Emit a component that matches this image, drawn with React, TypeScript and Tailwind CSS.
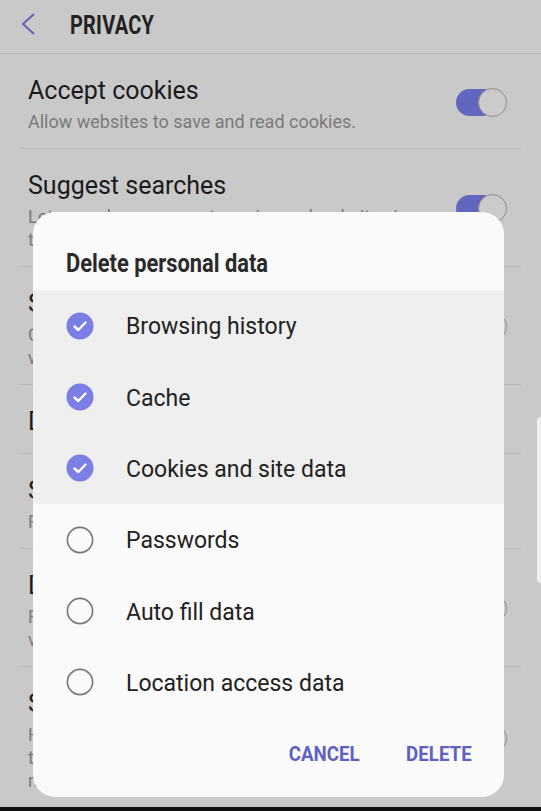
import React from 'react';

const font = { fontFamily: 'Roboto, "Noto Sans", sans-serif' };

type Setting = { title: string; lines: string[]; toggle?: boolean };

const settings: Setting[] = [
  { title: 'Accept cookies', lines: ['Allow websites to save and read cookies.'], toggle: true },
  { title: 'Suggest searches', lines: ['Let your phone suggest queries and websites in', 'the address bar as you type.'], toggle: true },
  { title: 'Show security warnings', lines: ['Check sites for security problems and warn', 'when one is found.'], toggle: true },
  { title: 'Delete personal data', lines: [] },
  { title: 'Smart protection', lines: ['Find and block pop-ups and trackers.'] },
  { title: 'Do not track', lines: ['Forward "Do not track" requests to all', 'visited websites.'], toggle: true },
  { title: 'Secret mode settings', lines: ['Hide secret mode tabs and require a password', 'to open them. Lock or unlock secret mode', 'right from the menu.'], toggle: true },
];

const options = [
  { label: 'Browsing history', checked: true },
  { label: 'Cache', checked: true },
  { label: 'Cookies and site data', checked: true },
  { label: 'Passwords', checked: false },
  { label: 'Auto fill data', checked: false },
  { label: 'Location access data', checked: false },
];

const Toggle = () => (
  <div className="relative w-[51px] h-[29px] shrink-0 -mt-[4px]">
    <div className="absolute left-0 top-[1px] w-[40px] h-[27px] rounded-full bg-[#6266bf]" />
    <div className="absolute right-0 top-0 w-[29px] h-[29px] rounded-full bg-[#cbcbcb] border border-[#8c8c8c]" />
  </div>
);

const CheckCircle = ({ checked }: { checked: boolean }) =>
  checked ? (
    <svg width="28" height="28" viewBox="0 0 28 28" className="shrink-0">
      <circle cx="14" cy="14" r="13.5" fill="#7b7fe5" />
      <path d="M8.5 14.5 L12.3 18 L19.5 10.5" fill="none" stroke="#fff" strokeWidth="2.4" strokeLinecap="round" strokeLinejoin="round" />
    </svg>
  ) : (
    <svg width="28" height="28" viewBox="0 0 28 28" className="shrink-0">
      <circle cx="14" cy="14" r="12.6" fill="none" stroke="#777" strokeWidth="1.6" />
    </svg>
  );

export default function App() {
  return (
    <div className="relative w-[541px] h-[811px] overflow-hidden bg-[#c9c9c9]" style={font}>
      <header className="h-[54px] flex items-center border-b border-[#b6b6b6]">
        <svg width="16" height="22" viewBox="0 0 16 22" className="ml-[21px] -mt-[6px]">
          <polyline points="13,1 2,11 13,21" fill="none" stroke="#5f62b5" strokeWidth="2" />
        </svg>
        <h1 className="ml-[33px] -mt-[2px] text-[25px] font-bold text-[#222] origin-left scale-x-[0.8] tracking-[0.01em]">PRIVACY</h1>
      </header>

      <div className="flex flex-col">
        {settings.map((s) => (
          <div key={s.title} className="mx-[20px] border-b border-[#b9b9b9] flex items-center pl-[8px] pr-[14px] pt-[21px] pb-[15px]">
            <div className="flex-1 min-w-0">
              <div className="text-[25px] leading-[32px] text-[#1b1b1b] whitespace-nowrap">{s.title}</div>
              {s.lines.length > 0 && (
                <div className="mt-[3px]">
                  {s.lines.map((l) => (
                    <div key={l} className="text-[18px] leading-[23px] text-[#7a7a7a] whitespace-nowrap">{l}</div>
                  ))}
                </div>
              )}
            </div>
            {s.toggle && <Toggle />}
          </div>
        ))}
      </div>

      <div className="absolute right-0 top-[417px] w-[4px] h-[166px] rounded-l bg-[#efefef]" />
      <div className="absolute left-0 right-0 bottom-0 h-[4px] bg-[#111]" />

      <div className="absolute left-[33px] top-[212px] w-[471px] h-[585px] rounded-[22px] bg-[#fafafa] overflow-hidden flex flex-col">
        <div className="h-[78px] flex items-center pl-[33px] pt-[24px]">
          <h2 className="text-[26px] font-bold text-[#2a2a2a] origin-left scale-x-[0.84] whitespace-nowrap">Delete personal data</h2>
        </div>
        {options.map((o) => (
          <div
            key={o.label}
            className={`h-[71.3px] flex items-center pl-[33px] ${o.checked ? 'bg-[#efefef]' : ''}`}
          >
            <CheckCircle checked={o.checked} />
            <span className="ml-[32px] pt-[4px] text-[23px] text-[#222]">{o.label}</span>
          </div>
        ))}
        <div className="flex-1 flex items-center justify-end gap-[39px] pr-[32px] pb-[5px]">
          <button className="text-[21px] font-bold text-[#5d61c2] origin-right scale-x-[0.89]">CANCEL</button>
          <button className="text-[21px] font-bold text-[#5d61c2] origin-right scale-x-[0.89]">DELETE</button>
        </div>
      </div>
    </div>
  );
}
